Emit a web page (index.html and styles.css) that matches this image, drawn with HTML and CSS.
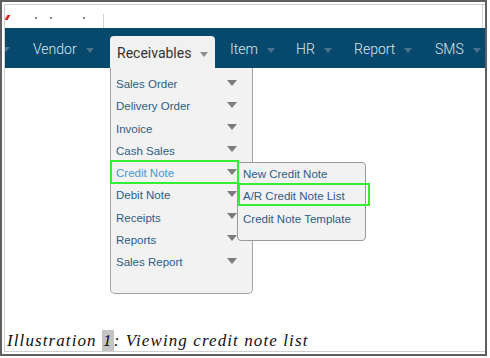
FILE: index.html
```html
<!DOCTYPE html>
<html>
<head>
<meta charset="utf-8">
<link rel="stylesheet" href="styles.css">
</head>
<body>
<div class="frame">
  <div class="inner">
    <div class="shot">
      <div class="topstrip">
        <span class="redmark"></span>
        <span class="dot d1"></span>
        <span class="dot d2"></span>
        <span class="dot d3"></span>
        <span class="vline"></span>
      </div>
      <nav class="navbar">
        <div class="nav-lead"><span class="caret"></span></div>
        <div class="nav-item w-vendor">Vendor<span class="caret"></span></div>
        <div class="nav-item tab">Receivables<span class="caret"></span>
          <ul class="dropdown">
            <li><span class="label">Sales Order</span><span class="tri"></span></li>
            <li><span class="label">Delivery Order</span><span class="tri"></span></li>
            <li><span class="label">Invoice</span><span class="tri"></span></li>
            <li><span class="label">Cash Sales</span><span class="tri"></span></li>
            <li class="active"><span class="label">Credit Note</span><span class="tri"></span>
              <span class="hl hl-credit"></span>
              <ul class="submenu">
                <li>New Credit Note</li>
                <li>A/R Credit Note List</li>
                <li>Credit Note Template</li>
                <span class="hl hl-list"></span>
              </ul>
            </li>
            <li><span class="label">Debit Note</span><span class="tri"></span></li>
            <li><span class="label">Receipts</span><span class="tri"></span></li>
            <li><span class="label">Reports</span><span class="tri"></span></li>
            <li><span class="label">Sales Report</span><span class="tri"></span></li>
          </ul>
        </div>
        <div class="nav-item w-item">Item<span class="caret"></span></div>
        <div class="nav-item w-hr">HR<span class="caret"></span></div>
        <div class="nav-item w-report">Report<span class="caret"></span></div>
        <div class="nav-item w-sms">SMS<span class="caret"></span></div>
      </nav>
      <div class="page"></div>
    </div>
    <div class="caption">Illustration <span class="num">1</span>: Viewing credit note list</div>
  </div>
</div>
</body>
</html>
```
FILE: styles.css
```css
html, body { margin: 0; padding: 0; background: #fff; }
.frame {
  width: 487px; height: 356px; box-sizing: border-box;
  border: 2px solid #5f5f5f;
  padding: 2px 0 2px 2px;
  display: flex;
}
.inner {
  flex: 1; border: 1px solid #cfcfcf; border-right: none;
  display: flex; flex-direction: column; overflow: hidden;
}
.shot { flex: 1; display: flex; flex-direction: column; }
.topstrip {
  height: 23px; position: relative; border-right: 1px solid #d8d8d8; margin-right: 2px;
}
.redmark { position: absolute; left: 1px; top: 10px; width: 3px; height: 5px; background: #e0201c; transform: skewX(-30deg); }
.dot { position: absolute; top: 12px; width: 2px; height: 2px; background: #888; }
.d1 { left: 30px; } .d2 { left: 45px; } .d3 { left: 78px; }
.vline { position: absolute; left: 98px; top: 9px; bottom: 0; width: 1px; background: #d2d2d2; }

.navbar {
  height: 40px; background: #06496d; display: flex; align-items: flex-end;
  font-family: Roboto, "Liberation Sans", sans-serif; font-size: 14px; font-weight: 300; color: #dfe7ee;
}
.nav-item { height: 40px; display: flex; align-items: center; box-sizing: border-box; position: relative; padding-top: 2px; }
.nav-lead { width: 28px; height: 40px; display: flex; align-items: center; }
.nav-lead .caret { margin-left: -3px; }
.caret {
  display: inline-block; width: 0; height: 0; margin-left: 9px; margin-top: 3px;
  border-left: 4px solid transparent; border-right: 4px solid transparent;
  border-top: 5px solid #4b7190;
}
.w-vendor { width: 77px; }
.tab {
  width: 105px; height: 32px; padding-left: 7px; background: #f1f1f1; color: #333;
  border-radius: 4px 4px 0 0; font-weight: 400;
}
.tab > .caret { border-top-color: #8c8c8c; }
.w-item { width: 66px; margin-left: 15px; }
.w-hr { width: 58px; }
.w-report { width: 81px; }
.w-sms { flex: 1; }

.dropdown {
  position: absolute; left: 0; top: 100%; margin: 0; list-style: none;
  width: 143px; height: 226px; box-sizing: border-box; padding: 5px 0 0 0;
  background: #f2f2f2; border: 1px solid #a3a3a3; border-top: none;
  border-radius: 0 0 5px 5px;
  font-family: "Liberation Sans", Arial, sans-serif; font-size: 11.5px; color: #2c5d87;
  z-index: 2;
}
.dropdown > li {
  height: 22.25px; display: flex; align-items: center; padding-left: 5px; position: relative;
}
.dropdown .label { flex: 1; }
.tri {
  width: 0; height: 0; margin-right: 15px; margin-bottom: 3px;
  border-left: 5.5px solid transparent; border-right: 5.5px solid transparent;
  border-top: 6px solid #7c7c7c;
}
.dropdown > li.active { color: #4597d3; }
.submenu {
  position: absolute; left: 126px; top: 0; margin: 0; padding: 0; list-style: none;
  width: 129px; height: 79px; box-sizing: border-box;
  background: #f2f2f2; border: 1px solid #9a9a9a; border-radius: 0 4px 4px 4px;
  color: #2c5d87; z-index: 3;
}
.submenu li { height: 22.25px; display: flex; align-items: center; padding-left: 5px; }
.hl { position: absolute; box-sizing: border-box; border: 2px solid #33ee33; z-index: 5; }
.hl-credit { left: -1px; top: -2px; width: 129px; height: 24px; }
.hl-list { left: 0; top: 20px; width: 132px; height: 23px; }
.page { flex: 1; }

.caption {
  font-family: "Liberation Serif", "Times New Roman", serif; font-style: italic;
  font-size: 17px; letter-spacing: 1.1px; line-height: 20px; color: #111;
  padding: 0 0 0 2px;
}
.num { background: #c4c4c4; padding: 1px 1px 2px; }
```
